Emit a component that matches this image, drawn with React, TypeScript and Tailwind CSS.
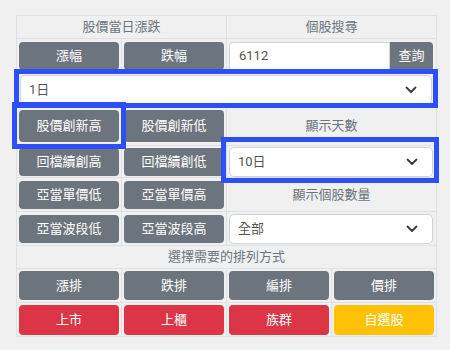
import React from "react";

const FONT = { fontFamily: "Roboto, 'Noto Sans CJK TC', 'Noto Sans', sans-serif" };

function Btn({ label, color = "gray", h = "h-[28px]" }: { label: string; color?: "gray" | "red" | "yellow"; h?: string }) {
  const bg =
    color === "gray" ? "bg-[#6c757d]" : color === "red" ? "bg-[#dc3545]" : "bg-[#ffc107]";
  return (
    <div className="flex h-full items-center border-r border-b border-[#dee2e6] px-[2px]">
      <div className={`${h} ${bg} flex w-full items-center justify-center rounded-[4px] text-[13px] text-white`}>
        {label}
      </div>
    </div>
  );
}

function Chevron() {
  return (
    <svg width="12" height="8" viewBox="0 0 12 8" className="shrink-0">
      <polyline points="1.5,1.5 6,6 10.5,1.5" fill="none" stroke="#343a40" strokeWidth="1.8" strokeLinecap="round" strokeLinejoin="round" />
    </svg>
  );
}

function Select({ value, span, pl = "pl-[3px]", pr = "pr-[4px]" }: { value: string; span: string; pl?: string; pr?: string }) {
  return (
    <div className={`${span} flex h-full items-center border-r border-b border-[#dee2e6] ${pl} ${pr}`}>
      <div className="flex h-[30px] w-full items-center justify-between rounded-[5px] border border-[#ced4da] bg-white pl-[8px] pr-[14px] text-[13px] text-[#555]">
        <span>{value}</span>
        <Chevron />
      </div>
    </div>
  );
}

function Label({ text, span }: { text: string; span: string }) {
  return (
    <div className={`${span} flex h-full items-center justify-center border-r border-b border-[#dee2e6] text-[13px] text-[#6c757d]`}>
      {text}
    </div>
  );
}

export default function App() {
  return (
    <div className="relative h-[350px] w-[450px] overflow-hidden bg-[#f0f0f0]" style={FONT}>
      <div className="pl-[16px] pt-[15px]">
        <div className="grid w-[421px] grid-cols-[repeat(4,105px)] grid-rows-[23px_35px_33px_39px_32px_34px_34px_23px_34px_34px] border-l border-t border-[#dee2e6]">
          {/* row 1 */}
          <Label text="股價當日漲跌" span="col-span-2" />
          <Label text="個股搜尋" span="col-span-2" />
          {/* row 2 */}
          <Btn label="漲幅" />
          <Btn label="跌幅" />
          <div className="col-span-2 flex h-full items-center border-r border-b border-[#dee2e6] pl-[2px] pr-[3px]">
            <div className="flex h-[29px] w-full">
              <div className="flex flex-1 items-center rounded-l-[4px] border border-[#ced4da] bg-white pl-[9px] text-[13px] text-[#555]">
                6112
              </div>
              <div className="flex w-[43px] items-center justify-center rounded-r-[4px] bg-[#6c757d] text-[13px] text-white">
                查詢
              </div>
            </div>
          </div>
          {/* row 3 */}
          <Select value="1日" span="col-span-4" pl="pl-[3px]" pr="pr-[4px]" />
          {/* row 4 */}
          <Btn label="股價創新高" h="h-[32px]" />
          <Btn label="股價創新低" h="h-[32px]" />
          <Label text="顯示天數" span="col-span-2" />
          {/* row 5 */}
          <Btn label="回檔續創高" />
          <Btn label="回檔續創低" />
          <Select value="10日" span="col-span-2" pl="pl-[2px]" pr="pr-[3px]" />
          {/* row 6 */}
          <Btn label="亞當單價低" />
          <Btn label="亞當單價高" />
          <Label text="顯示個股數量" span="col-span-2" />
          {/* row 7 */}
          <Btn label="亞當波段低" />
          <Btn label="亞當波段高" />
          <Select value="全部" span="col-span-2" pl="pl-[2px]" pr="pr-[3px]" />
          {/* row 8 */}
          <Label text="選擇需要的排列方式" span="col-span-4" />
          {/* row 9 */}
          <Btn label="漲排" h="h-[29px]" />
          <Btn label="跌排" h="h-[29px]" />
          <Btn label="編排" h="h-[29px]" />
          <Btn label="價排" h="h-[29px]" />
          {/* row 10 */}
          <Btn label="上市" color="red" h="h-[30px]" />
          <Btn label="上櫃" color="red" h="h-[30px]" />
          <Btn label="族群" color="red" h="h-[30px]" />
          <Btn label="自選股" color="yellow" h="h-[30px]" />
        </div>
      </div>

      {/* highlight overlays */}
      <div className="pointer-events-none absolute left-[14px] top-[69px] h-[39px] w-[424px] border-[5px] border-[#2d4ff8]" />
      <div className="pointer-events-none absolute left-[12px] top-[102px] h-[47px] w-[114px] border-[5px] border-[#2d4ff8]" />
      <div className="pointer-events-none absolute left-[221px] top-[137px] h-[46px] w-[218px] border-[5px] border-[#2d4ff8]" />
    </div>
  );
}
